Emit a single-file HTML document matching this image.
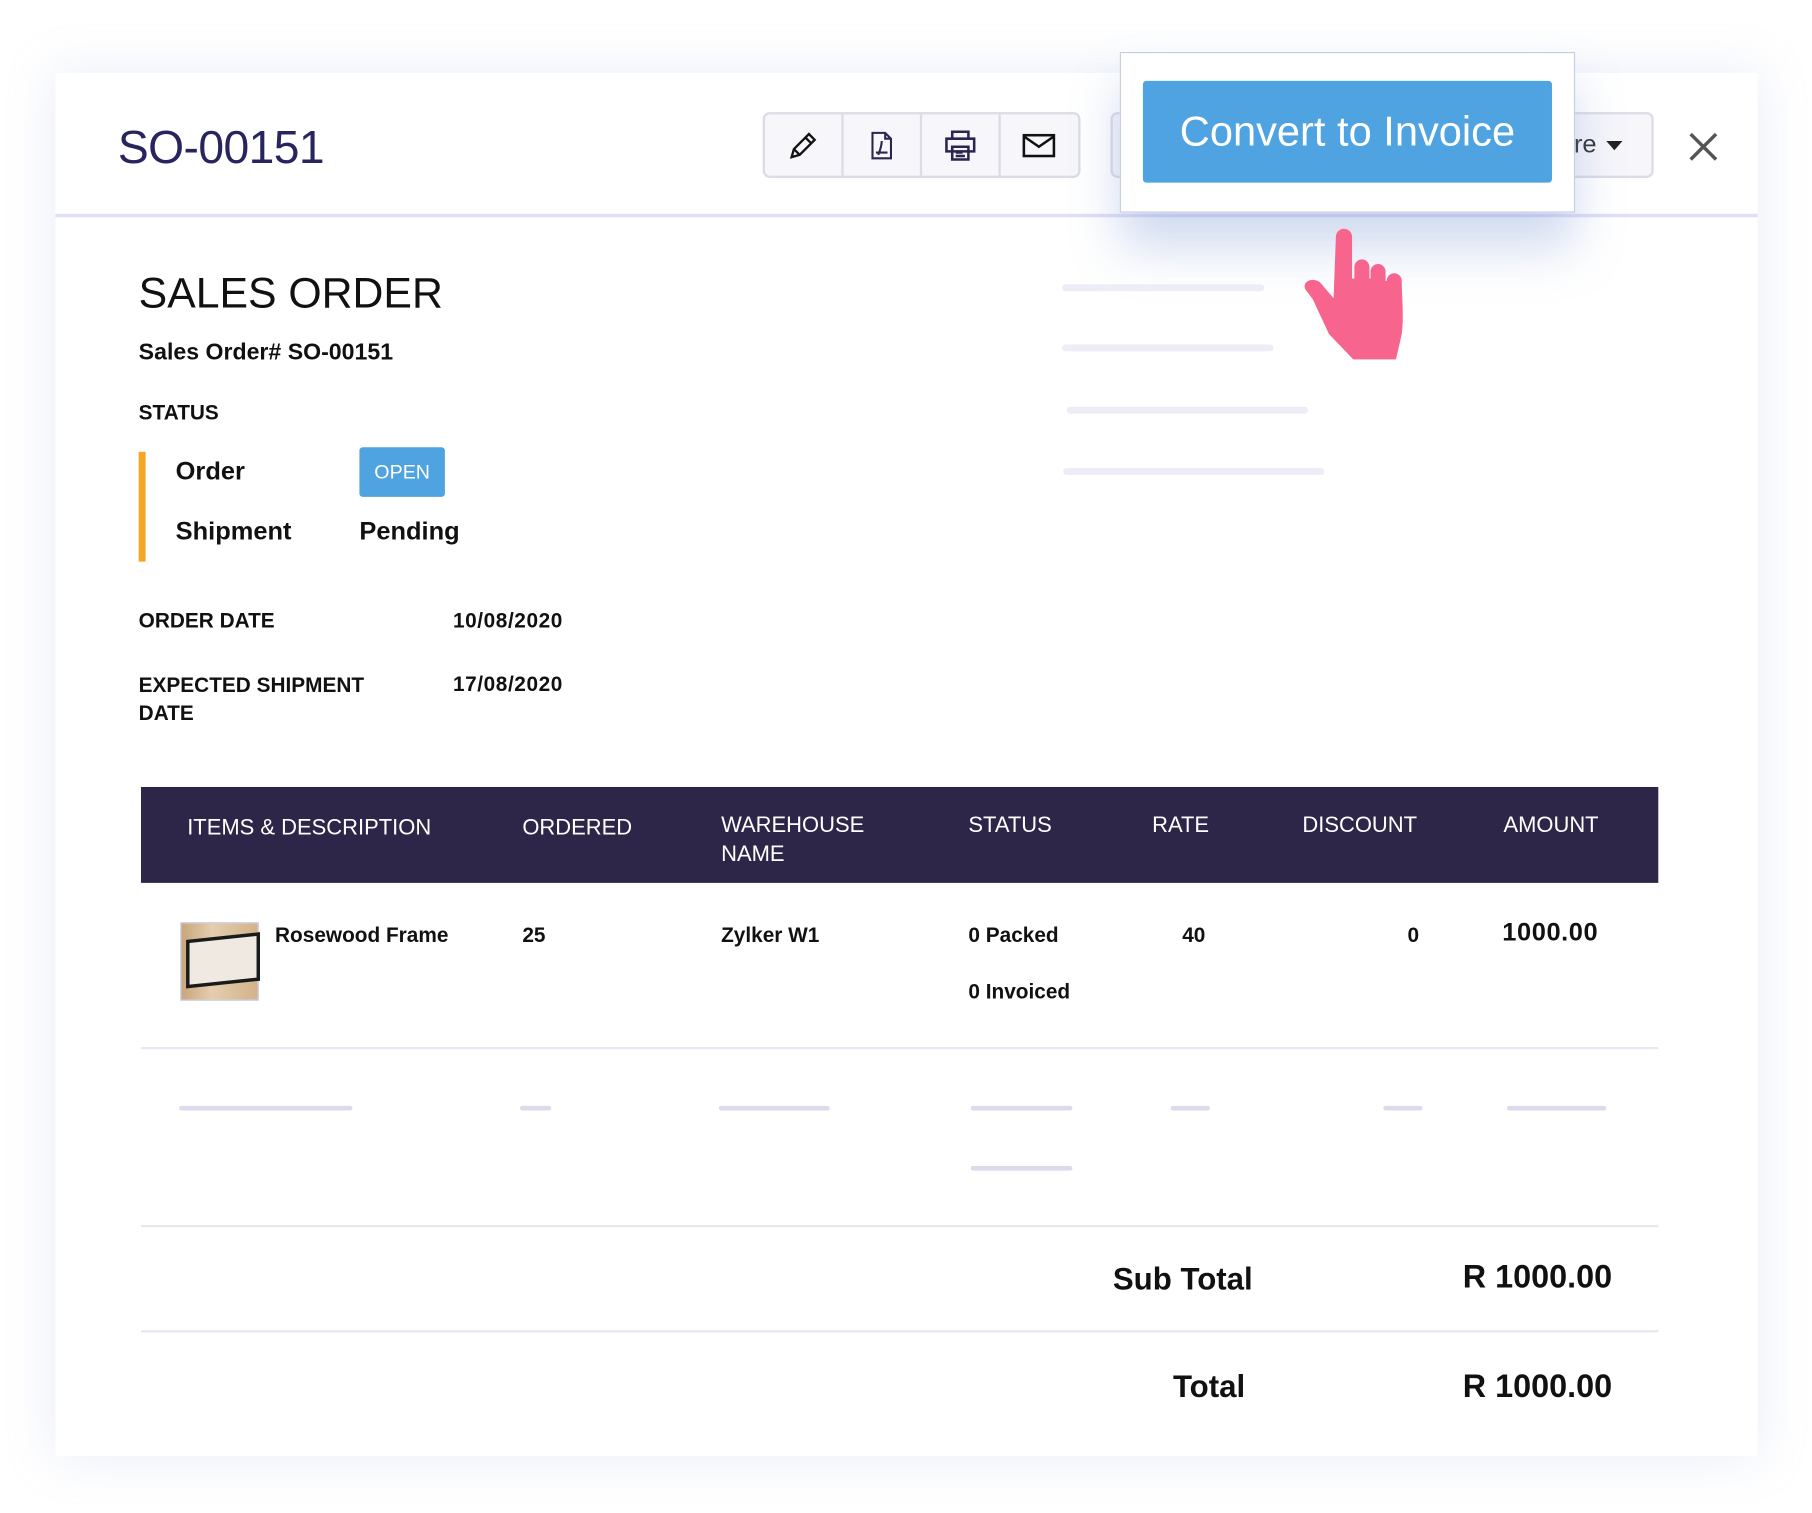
<!DOCTYPE html>
<html><head><meta charset="utf-8"><style>
html,body{margin:0;padding:0;background:#fff;width:1812px;height:1512px;overflow:hidden}
#w{position:absolute;left:0;top:0;width:1568px;height:1309px;transform:scale(1.15561);transform-origin:0 0;font-family:"Liberation Sans",sans-serif;color:#111}
.a{position:absolute;white-space:nowrap}
.card{left:48px;top:63px;width:1473px;height:1197px;background:#fff;box-shadow:0 0 40px rgba(160,180,230,.25)}
.pl{position:absolute;height:6px;border-radius:3px;background:#ededf8}
.tl{position:absolute;height:4px;border-radius:2px;background:#dcdaeb}
.th{color:#fff;font-size:19px;line-height:25px}
.td{font-size:18px;font-weight:bold;line-height:22px;color:#111}
.hl{position:absolute;left:122px;width:1313px;height:2px;background:#e8e8f0}
.btn{position:absolute;top:0;width:66px;height:53px;border-right:2px solid #dcdce6;display:flex;align-items:center;justify-content:center}
</style></head><body><div id="w">
<div class="a card"></div>
<div class="a" style="left:48px;top:185px;width:1473px;height:3px;background:#e0defa"></div>
<div class="a" style="left:102px;top:105px;font-size:40px;line-height:46px;color:#27245e;letter-spacing:-0.5px">SO-00151</div>
<div class="a" style="left:660px;top:97px;width:271px;height:53px;background:#f6f6fb;border:2px solid #dcdce6;border-radius:6px">
 <div class="btn" style="left:0"><svg width="28" height="28" viewBox="0 0 28 28" fill="none" stroke="#111" stroke-width="2"><path d="M4 24l2-7L19 4l5 5-13 13z M16 7l5 5 M6 17l5 5"/></svg></div>
 <div class="btn" style="left:68px"><svg width="22" height="26" viewBox="0 0 22 26" fill="none" stroke="#2b2550" stroke-width="1.8"><path d="M3 2h11l5 5v17H3z M14 2v5h5 M8 21c2-5 3-9 3-12 M6 19h10"/></svg></div>
 <div class="btn" style="left:136px"><svg width="30" height="28" viewBox="0 0 30 28" fill="none" stroke="#2b2550" stroke-width="2.2"><path d="M8 8V2h14v6 M3 8h24v11H3z M8 15h14v11H8z M11 20h6 M11 23h8"/></svg></div>
 <div class="btn" style="left:204px;border-right:none"><svg width="30" height="24" viewBox="0 0 30 24" fill="none" stroke="#111" stroke-width="2.2"><rect x="2" y="3" width="26" height="18"/><path d="M2 4l13 9 13-9"/></svg></div>
</div>
<div class="a" style="left:961px;top:97px;width:466px;height:53px;background:#f6f6fb;border:2px solid #dcdce6;border-radius:6px"></div>
<div class="a" style="left:1362px;top:112px;font-size:22px;line-height:26px;color:#333">re</div>
<div class="a" style="left:1390px;top:122px;width:0;height:0;border-left:7px solid transparent;border-right:7px solid transparent;border-top:8px solid #222"></div>
<svg class="a" style="left:1461px;top:114px" width="26" height="26" viewBox="0 0 26 26" stroke="#555" stroke-width="3"><path d="M2 2l22 22M24 2L2 24"/></svg>
<div class="a" style="left:969px;top:45px;width:392px;height:137px;background:#fff;border:1px solid #c5cede;box-shadow:0 30px 40px rgba(120,150,210,.35)"></div>
<div class="a" style="left:989px;top:70px;width:354px;height:88px;background:#4ea3e0;border-radius:3px;color:#fff;font-size:36px;line-height:88px;text-align:center">Convert to Invoice</div>
<svg class="a" style="left:1128px;top:197px" width="90" height="115" viewBox="0 0 90 115" fill="#f7658f"><path d="M28 8a7 7 0 0 1 14 0v36h2V34a6.5 6.5 0 0 1 13 0v10h1V38a6.5 6.5 0 0 1 13 0v8h1a6.5 6.5 0 0 1 13 0c0 14 2 30 0 46l-5 22H43L22 92 8 62 2 54c-4-6 4-12 12-7l12 14z"/></svg>
<div class="a" style="left:120px;top:234px;font-size:37px;line-height:40px">SALES ORDER</div>
<div class="a" style="left:120px;top:294px;font-size:20px;line-height:22px;font-weight:bold">Sales Order# SO-00151</div>
<div class="a" style="left:120px;top:347px;font-size:18px;line-height:20px;font-weight:bold">STATUS</div>
<div class="a" style="left:120px;top:391px;width:6px;height:95px;background:#f5a623"></div>
<div class="a" style="left:152px;top:396px;font-size:22px;line-height:24px;font-weight:bold">Order</div>
<div class="a" style="left:311px;top:387px;width:74px;height:43px;background:#4ea3e0;border-radius:3px;color:#fff;font-size:17px;line-height:43px;text-align:center">OPEN</div>
<div class="a" style="left:152px;top:448px;font-size:22px;line-height:24px;font-weight:bold">Shipment</div>
<div class="a" style="left:311px;top:448px;font-size:22px;line-height:24px;font-weight:bold">Pending</div>
<div class="a" style="left:120px;top:526px;font-size:18px;line-height:22px;font-weight:bold">ORDER DATE</div>
<div class="a" style="left:392px;top:526px;font-size:18px;line-height:22px;font-weight:bold;letter-spacing:0.5px">10/08/2020</div>
<div class="a" style="left:120px;top:581px;font-size:18px;line-height:24px;font-weight:bold">EXPECTED SHIPMENT<br>DATE</div>
<div class="a" style="left:392px;top:581px;font-size:18px;line-height:22px;font-weight:bold;letter-spacing:0.5px">17/08/2020</div>
<div class="pl" style="left:919px;top:246px;width:175px"></div>
<div class="pl" style="left:919px;top:298px;width:183px"></div>
<div class="pl" style="left:923px;top:352px;width:209px"></div>
<div class="pl" style="left:920px;top:405px;width:226px"></div>
<div class="a" style="left:122px;top:681px;width:1313px;height:83px;background:#2e2649"></div>
<div class="a th" style="left:162px;top:704px">ITEMS &amp; DESCRIPTION</div>
<div class="a th" style="left:452px;top:704px">ORDERED</div>
<div class="a th" style="left:624px;top:702px">WAREHOUSE<br>NAME</div>
<div class="a th" style="left:838px;top:702px">STATUS</div>
<div class="a th" style="left:997px;top:702px">RATE</div>
<div class="a th" style="left:1127px;top:702px">DISCOUNT</div>
<div class="a th" style="left:1301px;top:702px">AMOUNT</div>
<div class="a" style="left:156px;top:798px;width:66px;height:66px;border:1px solid #c8c8e0;background:linear-gradient(90deg,#c9a57a,#e4cdae 40%,#d2b28a)"></div>
<div class="a" style="left:161px;top:810px;width:58px;height:36px;background:#efe9e2;border:3px solid #1a1a1a;transform:skewY(-6deg)"></div>
<div class="a td" style="left:238px;top:798px">Rosewood Frame</div>
<div class="a td" style="left:452px;top:798px">25</div>
<div class="a td" style="left:624px;top:798px">Zylker W1</div>
<div class="a td" style="left:838px;top:798px">0 Packed</div>
<div class="a td" style="left:838px;top:847px">0 Invoiced</div>
<div class="a td" style="left:1023px;top:798px">40</div>
<div class="a td" style="left:1218px;top:798px">0</div>
<div class="a" style="left:1300px;top:794px;font-size:22px;line-height:26px;font-weight:bold;letter-spacing:0.5px">1000.00</div>
<div class="hl" style="top:906px"></div>
<div class="tl" style="left:155px;top:957px;width:150px"></div>
<div class="tl" style="left:450px;top:957px;width:27px"></div>
<div class="tl" style="left:622px;top:957px;width:96px"></div>
<div class="tl" style="left:840px;top:957px;width:88px"></div>
<div class="tl" style="left:1013px;top:957px;width:34px"></div>
<div class="tl" style="left:1197px;top:957px;width:34px"></div>
<div class="tl" style="left:1304px;top:957px;width:86px"></div>
<div class="tl" style="left:840px;top:1009px;width:88px"></div>
<div class="hl" style="top:1060px"></div>
<div class="hl" style="top:1151px"></div>
<div class="a" style="left:963px;top:1092px;font-size:27px;line-height:30px;font-weight:bold">Sub Total</div>
<div class="a" style="left:1195px;width:200px;text-align:right;top:1090px;font-size:28px;line-height:30px;font-weight:bold">R 1000.00</div>
<div class="a" style="left:1015px;top:1185px;font-size:27px;line-height:30px;font-weight:bold">Total</div>
<div class="a" style="left:1195px;width:200px;text-align:right;top:1185px;font-size:28px;line-height:30px;font-weight:bold">R 1000.00</div>
</div></body></html>
